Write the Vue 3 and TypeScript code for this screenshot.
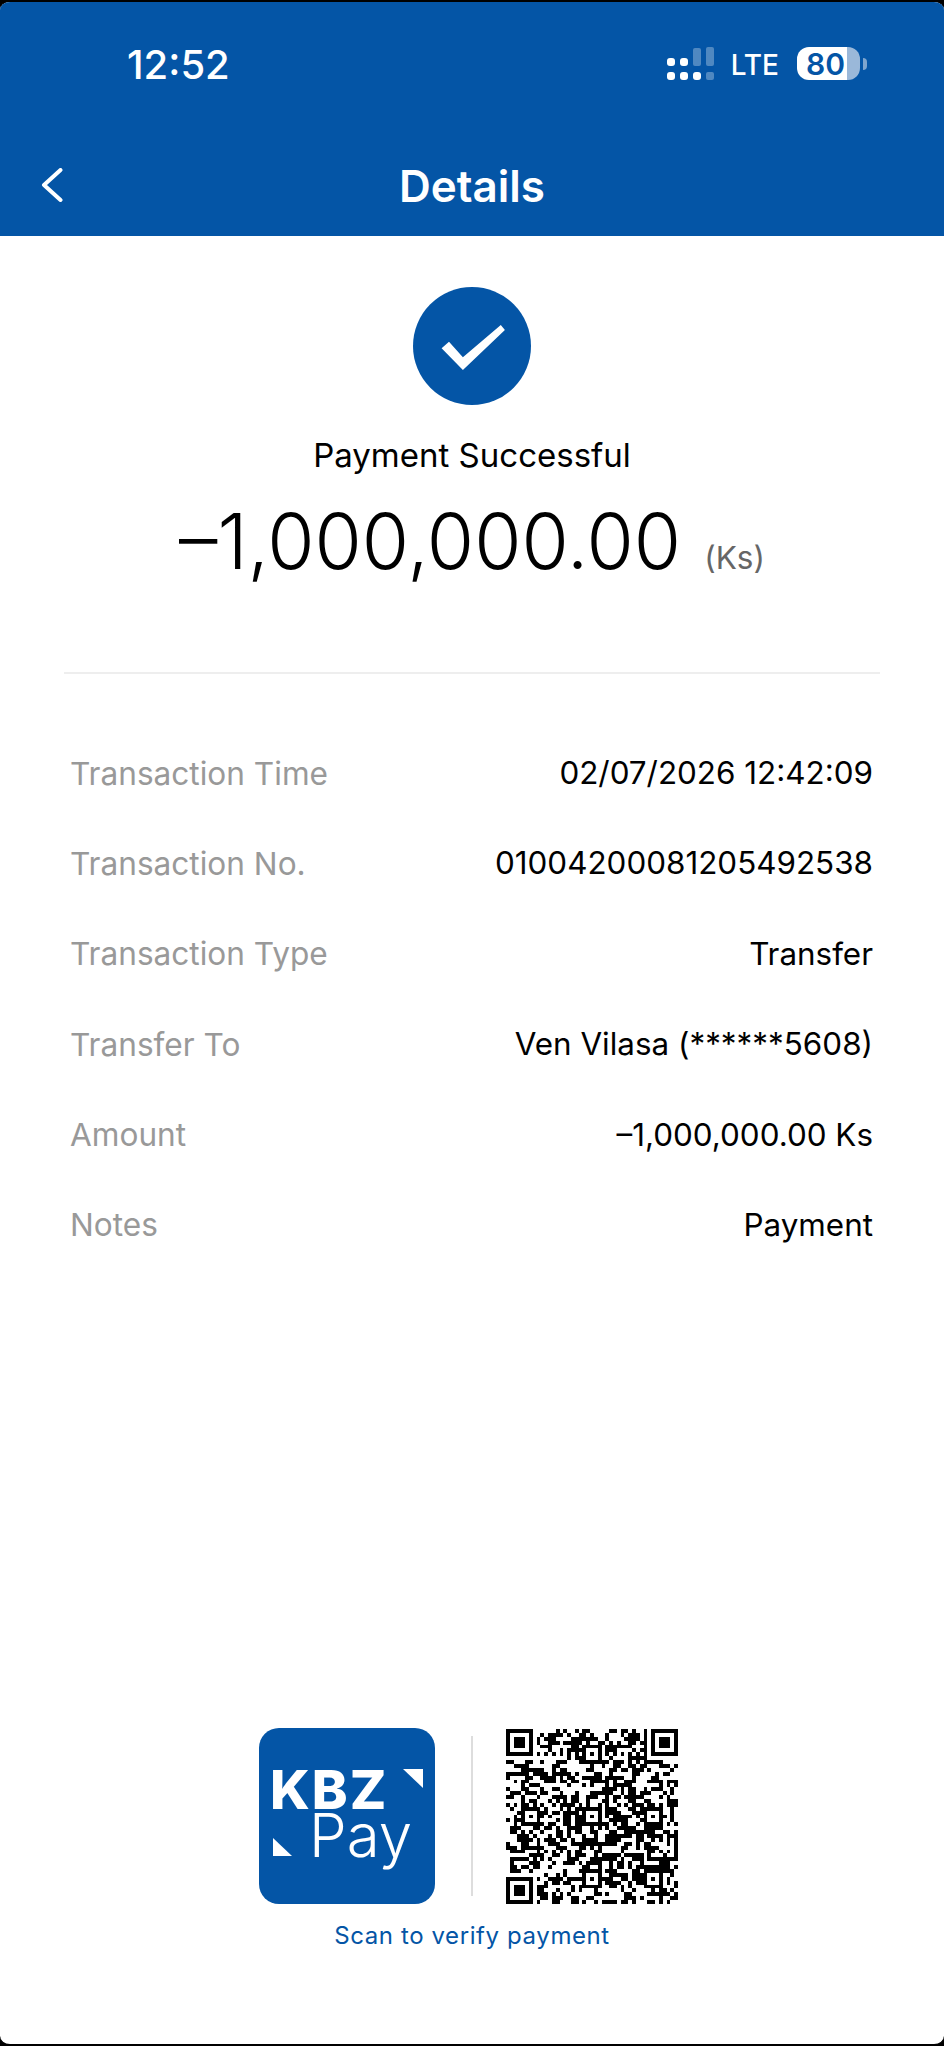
<script setup lang="ts">
const rows = [
  { label: 'Transaction Time', value: '02/07/2026 12:42:09' },
  { label: 'Transaction No.', value: '01004200081205492538' },
  { label: 'Transaction Type', value: 'Transfer' },
  { label: 'Transfer To', value: 'Ven Vilasa (******5608)' },
  { label: 'Amount', value: '–1,000,000.00 Ks' },
  { label: 'Notes', value: 'Payment' },
]

// version 7 QR layout: finders, timing and alignment are fixed, the rest is seeded noise
const size = 45
const cells: boolean[][] = []
let seed = 20260207
const rand = () => {
  seed = (seed * 1664525 + 1013904223) >>> 0
  return (seed >>> 16) % 100 < 50
}
for (let y = 0; y < size; y++) {
  cells.push([])
  for (let x = 0; x < size; x++) cells[y].push(rand())
}
const stamp = (cx: number, cy: number, r: number) => {
  for (let y = cy - r; y <= cy + r; y++) {
    for (let x = cx - r; x <= cx + r; x++) {
      if (y < 0 || x < 0 || y >= size || x >= size) continue
      const d = Math.max(Math.abs(x - cx), Math.abs(y - cy))
      cells[y][x] = r === 4 ? d !== 4 && d !== 2 : d !== 1
    }
  }
}
for (let i = 8; i < size - 8; i++) {
  cells[6][i] = i % 2 === 0
  cells[i][6] = i % 2 === 0
}
;[[22, 6], [38, 6], [6, 22], [22, 22], [38, 22], [22, 38], [38, 38]].forEach(([x, y]) => stamp(x, y, 2))
stamp(3, 3, 4)
stamp(41, 3, 4)
stamp(3, 41, 4)

const qrPath = cells
  .map((row, y) => row.map((on, x) => (on ? `M${x} ${y}h1v1h-1z` : '')).join(''))
  .join('')
</script>

<template>
  <div class="screen">
    <header class="header">
      <div class="status">
        <span class="time">12:52</span>
        <div class="indicators">
          <svg class="signal" viewBox="0 0 47 33" width="47" height="33">
            <g fill="#fff">
              <rect x="0" y="11" width="8" height="8" rx="3" />
              <rect x="0" y="25" width="8" height="8" rx="3" />
              <rect x="13" y="11" width="8" height="8" rx="3" />
              <rect x="13" y="25" width="8" height="8" rx="3" />
              <rect x="26" y="25" width="8" height="8" rx="3" />
            </g>
            <g fill="#fff" opacity="0.3">
              <rect x="26" y="1" width="8" height="18" rx="2" />
              <rect x="39" y="0" width="8" height="19" rx="2" />
              <rect x="39" y="25" width="8" height="8" rx="2" />
            </g>
          </svg>
          <span class="lte">LTE</span>
          <div class="battery">
            <span class="battery-level">80</span>
          </div>
          <span class="battery-nib"></span>
        </div>
      </div>
      <div class="nav">
        <svg class="back" viewBox="0 0 22 34" width="22" height="34">
          <path d="M19.5 2 L3 17 L19.5 32" fill="none" stroke="#fff" stroke-width="4" stroke-linecap="round" stroke-linejoin="round" />
        </svg>
        <h1 class="title">Details</h1>
      </div>
    </header>

    <main class="body">
      <section class="result">
        <svg class="check" viewBox="0 0 118 118" width="118" height="118">
          <circle cx="59" cy="59" r="59" fill="#0455a6" />
          <polygon points="28.6,61.3 36,54.7 49.9,70.3 87.8,38 91.9,43 49.9,83" fill="#fff" />
        </svg>
        <p class="status-text">Payment Successful</p>
        <p class="amount">
          <span>–1,000,000.00</span>
          <small>(Ks)</small>
        </p>
      </section>

      <ul class="rows">
        <li v-for="row in rows" :key="row.label" class="row">
          <span class="label">{{ row.label }}</span>
          <span class="value">{{ row.value }}</span>
        </li>
      </ul>

      <footer class="verify">
        <div class="codes">
          <svg class="logo" viewBox="0 0 176 176" width="176" height="176">
            <rect width="176" height="176" rx="20" fill="#0455a6" />
            <text x="11" y="81" class="logo-kbz">KBZ</text>
            <text x="50" y="129" class="logo-pay">Pay</text>
            <polygon points="144,41 164,41 164,60" fill="#fff" />
            <polygon points="14,110 14,128 33,128" fill="#fff" />
          </svg>
          <span class="split"></span>
          <svg class="qr" :viewBox="`0 0 ${size} ${size}`" width="172" height="175" preserveAspectRatio="none" shape-rendering="crispEdges">
            <path :d="qrPath" fill="#000" />
          </svg>
        </div>
        <p class="scan">Scan to verify payment</p>
      </footer>
    </main>
  </div>
</template>

<style>
html,
body {
  margin: 0;
  background: #000;
}
</style>

<style scoped>
.screen {
  width: 944px;
  height: 2046px;
  box-sizing: border-box;
  border-top: 2px solid #000;
  border-bottom: 2px solid #000;
  display: flex;
  flex-direction: column;
  overflow: hidden;
  background: #fff;
  border-radius: 10px;
  font-family: Inter, "Liberation Sans", sans-serif;
  color: #000;
}
.header {
  height: 234px;
  background: #0455a6;
  color: #fff;
  display: flex;
  flex-direction: column;
  flex: none;
}
.status {
  display: flex;
  justify-content: space-between;
  align-items: center;
  height: 33px;
  margin-top: 45px;
  padding: 0 77px 0 127px;
}
.time {
  font-size: 40px;
  font-weight: 500;
  line-height: 33px;
  padding-top: 2px;
}
.indicators {
  display: flex;
  align-items: center;
}
.lte {
  font-size: 28px;
  font-weight: 500;
  line-height: 33px;
  margin: 0 18px 0 17px;
  padding-top: 3px;
}
.battery {
  width: 63px;
  height: 33px;
  box-sizing: border-box;
  border-radius: 12px;
  background: linear-gradient(90deg, #fff 50px, #9ab8d9 50px);
  display: flex;
  align-items: center;
  padding-left: 9px;
}
.battery-level {
  font-size: 30px;
  font-weight: 600;
  line-height: 30px;
  color: #0455a6;
}
.battery-nib {
  width: 4px;
  height: 12px;
  margin-left: 3px;
  border-radius: 0 6px 6px 0;
  background: #7ea5ce;
}
.nav {
  position: relative;
  display: flex;
  align-items: center;
  justify-content: center;
  margin-top: 81px;
  height: 50px;
}
.back {
  position: absolute;
  left: 41px;
  top: 7px;
}
.title {
  margin: 0;
  font-size: 44px;
  font-weight: 600;
  line-height: 50px;
}
.body {
  flex: 1;
  display: flex;
  flex-direction: column;
  min-height: 0;
}
.result {
  margin: 0 64px;
  padding-top: 51px;
  height: 438px;
  box-sizing: border-box;
  border-bottom: 2px solid #eee;
  display: flex;
  flex-direction: column;
  align-items: center;
}
.status-text {
  margin: 30px 0 0;
  font-size: 33px;
  line-height: 40px;
}
.amount {
  margin: 18px 0 0;
  display: flex;
  align-items: baseline;
  gap: 23px;
  font-size: 76.6px;
  font-weight: 350;
  line-height: 96px;
}
.amount small {
  font-size: 31.5px;
  color: #666;
  font-weight: 400;
}
.rows {
  list-style: none;
  margin: 79px 0 0;
  padding: 0 71px 0 70px;
  display: flex;
  flex-direction: column;
  gap: 50.4px;
}
.row {
  display: flex;
  justify-content: space-between;
  height: 40px;
  align-items: center;
  font-size: 31.4px;
}
.label {
  color: #999;
  font-size: 31.6px;
}
.value {
  color: #000;
}
.verify {
  margin-top: auto;
  padding-bottom: 93px;
  display: flex;
  flex-direction: column;
  align-items: center;
}
.codes {
  display: flex;
  align-items: center;
  margin-right: 8px;
}
.logo {
  display: block;
}
.logo-kbz {
  font-size: 54px;
  font-weight: 800;
  fill: #fff;
  letter-spacing: 2px;
}
.logo-pay {
  font-size: 60px;
  font-weight: 350;
  fill: #fff;
}
.split {
  width: 2px;
  height: 160px;
  background: #ddd;
  margin: 0 33px 0 36px;
}
.qr {
  display: block;
}
.scan {
  margin: 17px 0 0;
  font-size: 24px;
  line-height: 30px;
  color: #0455a6;
  letter-spacing: 0.6px;
}
</style>
